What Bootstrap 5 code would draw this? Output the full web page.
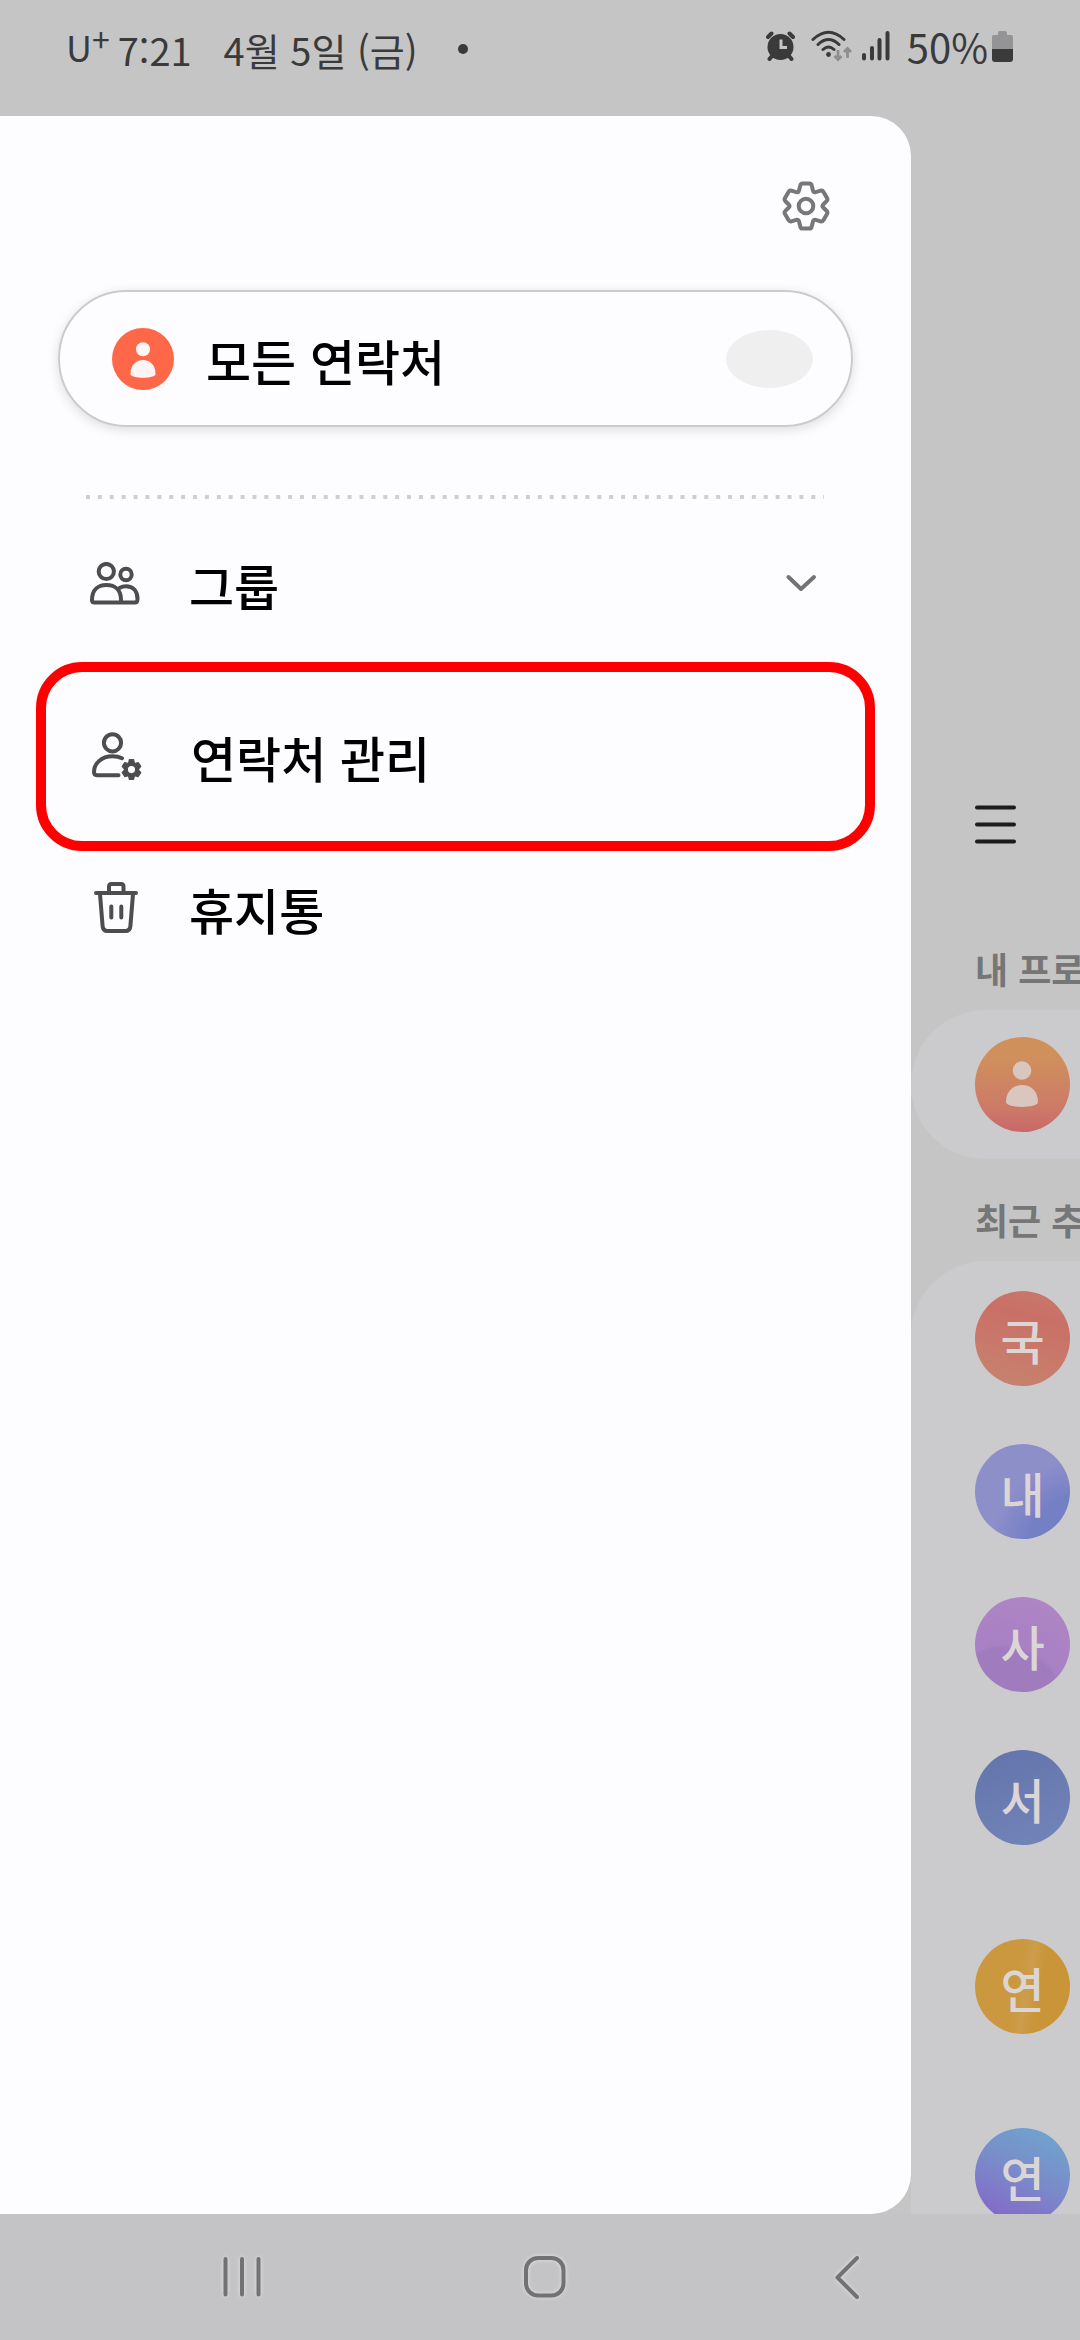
<!DOCTYPE html>
<html lang="ko">
<head>
<meta charset="utf-8">
<meta name="viewport" content="width=device-width, initial-scale=1">
<title>연락처</title>
<link href="https://cdn.jsdelivr.net/npm/bootstrap@5.3.0/dist/css/bootstrap.min.css" rel="stylesheet">
<style>
  body { background: #c5c5c6; color: #000; font-family: "Noto Sans CJK KR", sans-serif; font-size: 49px; line-height: 60px; font-weight: 500; }
  svg { display: block; flex: none; }
  .ln { fill: none; stroke: currentColor; stroke-width: 4; stroke-linecap: round; stroke-linejoin: round; }
  .ln-thin { stroke-width: 3; }
  .plain-btn { background: none; border: 0; padding: 0; color: inherit; font-weight: inherit; }

  .status-bar { height: 116px; padding: 0 66px; color: #3a3a3b; font-size: 38px; line-height: 48px; font-weight: 400; }
  .status-left { padding-top: 26px; }
  .status-right { padding-top: 22px; font-size: 40px; }
  .carrier { font-size: 36px; line-height: 40px; }
  .carrier sup { font-size: 32px; top: -10px; }
  .date-text { margin-left: 32px; }
  .notice-dot { width: 10px; height: 10px; margin: 18px 0 0 40px; background: #3a3a3b; }

  .main-area { min-height: 0; }
  .drawer { width: 911px; background: #fdfdff; border-radius: 0 40px 40px 0; padding-top: 65px; }
  .gear-btn { color: #777; margin-right: 81px; }
  .row-label { padding-top: 3px; }
  .all-contacts { height: 137px; margin: 59px 58px 0; padding: 0 38px 0 52px; border: 2px solid #cbcbcc; box-shadow: 0 3px 12px rgba(0,0,0,.13); }
  .all-contacts .row-label { margin-left: 32px; }
  .count-blank { width: 87px; height: 58px; border-radius: 50%; background: #efefef; }
  .dots { height: 4px; margin: 68px 87px 0 86px; background: linear-gradient(90deg, #cfcfd0 4px, transparent 4px) 0 0 / 12px 100% round; }
  .menu-row { width: 100%; padding: 0 94px 0 90px; }
  .menu-icon { width: 99px; color: #4d4d4e; }
  .row-group { height: 163px; padding-top: 5px; }
  .row-manage { height: 189px; margin: 0 36px; width: auto; padding: 0 46px; border: 10px solid #f00; border-radius: 46px; }
  .row-trash { height: 112px; }

  .side { min-width: 0; background: #c5c5c5; padding-top: 688px; }
  .side-menu { margin: 0 0 102px 64px; color: #1c1c1c; }
  .side-title { margin: 0 0 0 64px; font-size: 36px; line-height: 44px; font-weight: 700; color: #767677; }
  .side-card { background: #cbcbcd; padding-left: 64px; width: 100%; }
  .profile-card { height: 149px; border-radius: 75px 0 0 75px; margin-top: 20px; margin-bottom: 38px; }
  .recent-card { border-radius: 75px 0 0 0; margin-top: 20px; padding-top: 30px; gap: 58px; }
  .face { width: 95px; height: 95px; border-radius: 50%; color: #dcd5d5; font-size: 48px; line-height: 60px; flex: none; }
  .face-profile { background: linear-gradient(#d0905c 20%, #cc7a68 75%, #c9686b); }
  .face-a { background: linear-gradient(15deg, #c78470, #c97066 70%, #c87a6d); }
  .face-b { background: radial-gradient(circle at 110% 110%, #7480c4 35%, #8488c8 50%, #8d8fc9 60%); }
  .face-c { background: radial-gradient(circle at 30% 115%, #a07bbd 45%, #a880c4 48%, #b088c4); }
  .face-d { background: linear-gradient(160deg, #6373ab, #6c7eb4 60%, #7284b7); }
  .face-e { background: linear-gradient(100deg, #cb983f 45%, #cc9d4c 55%, #ca9539 66%); margin-top: 36px; }
  .face-f { background: linear-gradient(25deg, #8468c8 10%, #7a8aca 50%, #70a3cd 90%); margin-top: 36px; }

  .nav-keys { height: 126px; color: #727274; background: #c4c4c6; padding: 42px 220px 0 222px; }
  .nav-keys svg { filter: drop-shadow(0 0 2px #e4e4e6); }
</style>
<script src="https://cdn.jsdelivr.net/npm/bootstrap@5.3.0/dist/js/bootstrap.bundle.min.js"></script>
</head>
<body class="d-flex flex-column vh-100 overflow-hidden m-0">

<header class="status-bar d-flex justify-content-between align-items-start flex-shrink-0">
  <div class="status-left d-flex text-nowrap">
    <span class="carrier">U<sup>+</sup></span>
    <span class="ms-2">7:21</span>
    <span class="date-text">4월 5일 (금)</span>
    <span class="notice-dot rounded-circle"></span>
  </div>
  <div class="status-right d-flex align-items-center text-nowrap">
    <svg width="29" height="30" viewBox="0 0 29 30"><circle cx="14.500" cy="16" r="13" fill="currentColor"/><path class="ln" d="M2 6L5.500 2.500M27 6L23.500 2.500M3.500 28L6 25M25.500 28L23 25"/><path d="M15 8.500V16.500H21" fill="none" stroke="#c5c5c6" stroke-width="3"/></svg>
    <svg class="ms-3" width="41" height="32" viewBox="0 0 41 32"><path class="ln ln-thin" d="M2 9.500Q17.500 -5 33 9.500M7 14.500Q17.500 4.500 28 14.500M12 19.500Q17.500 14.500 23 19.500"/><circle cx="17.500" cy="24.500" r="2.400" fill="currentColor"/><path d="M27 20V29.500M23.500 26L27 29.500L30.500 26M36.500 28V18.500M33 22L36.500 18.500L40 22" fill="none" stroke="#8e8e90" stroke-width="2.800"/></svg>
    <svg class="ms-2" width="31" height="30" viewBox="0 0 31 30"><path class="ln" d="M4 24V27.500M12 17V27.500M19.500 9V27.500M27.500 2V27.500"/></svg>
    <span class="ms-3">50%</span>
    <svg class="ms-1" width="22" height="31" viewBox="0 0 22 31"><path fill="#949496" d="M0 19V6Q0 4 2 4H6V2Q6 0 8 0H13Q15 0 15 2V4H19Q21 4 21 6V19Z"/><path fill="currentColor" d="M0 18H21V28Q21 31 18 31H3Q0 31 0 28Z"/></svg>
  </div>
</header>

<div class="main-area d-flex flex-fill">
  <nav class="drawer flex-shrink-0" aria-label="연락처 메뉴">
    <div class="d-flex justify-content-end">
      <button type="button" class="plain-btn gear-btn" aria-label="설정">
        <svg width="48" height="50" viewBox="0 0 48 49"><path class="ln" d="M20.500 2H27.500Q29.300 2 29.700 4L31 9Q31.600 11.200 33.800 10.600L38.500 9.200Q40.500 8.700 41.500 10.400L45 16.600Q46 18.300 44.600 19.700L41.200 23Q39.800 24.500 41.200 26L44.600 29.300Q46 30.700 45 32.400L41.500 38.600Q40.500 40.300 38.500 39.800L33.800 38.400Q31.600 37.800 31 40L29.700 45Q29.300 47 27.500 47H20.500Q18.700 47 18.300 45L17 40Q16.400 37.800 14.200 38.400L9.500 39.800Q7.500 40.300 6.500 38.600L3 32.400Q2 30.700 3.400 29.300L6.800 26Q8.200 24.500 6.800 23L3.400 19.700Q2 18.300 3 16.600L6.500 10.400Q7.500 8.700 9.500 9.200L14.200 10.600Q16.400 11.200 17 9L18.300 4Q18.700 2 20.500 2Z"/><circle class="ln" cx="24" cy="24.500" r="7.300"/></svg>
      </button>
    </div>

    <a href="#all" class="all-contacts d-flex align-items-center rounded-pill text-decoration-none text-reset">
      <svg width="62" height="62" viewBox="0 0 62 62"><circle cx="31" cy="31" r="31" fill="#ff6749"/><g fill="#fcf5f4"><circle cx="31" cy="21.300" r="7"/><path d="M18.500 46C18.500 37 24 32 31 32S43.500 37 43.500 46C43.500 51 18.500 51 18.500 46Z"/></g></svg>
      <span class="row-label flex-fill">모든 연락처</span>
      <span class="count-blank"></span>
    </a>

    <div class="dots"></div>

    <button type="button" class="plain-btn menu-row row-group d-flex align-items-center text-start" aria-expanded="false">
      <span class="menu-icon"><svg width="50" height="43" viewBox="0 0 50 43"><g class="ln"><circle cx="16.300" cy="9.500" r="7.600"/><circle cx="36" cy="12.500" r="5.700"/><path d="M2 38C2 28 8 23 16.500 23S31 28 31 38Q31 40.500 29 40.500H4.500Q2 40.500 2 38ZM29.500 26Q32.500 24.300 36 24.300C43 24.300 47.500 29 47.500 37Q47.500 40.500 45 40.500H30"/></g></svg></span>
      <span class="row-label flex-fill">그룹</span>
      <svg width="32" height="20" viewBox="0 0 32 20" color="#737374"><path class="ln" d="M3.500 4L16 16L29 4"/></svg>
    </button>

    <a href="#manage" class="menu-row row-manage d-flex align-items-center text-decoration-none text-reset">
      <span class="menu-icon"><svg width="51" height="49" viewBox="0 0 51 49"><g class="ln"><circle cx="20.500" cy="10.800" r="8.600"/><path d="M30 26.200Q26 24.200 20.500 24.200C9 24.200 2 32 2 40Q2 43.200 5 43.200H26.500"/></g><path transform="translate(29.400 27.300) scale(.42)" fill="currentColor" stroke="currentColor" stroke-width="3" stroke-linejoin="round" fill-rule="evenodd" d="M19 1H29L31 10L40 8L46 17L40 24.500L46 32L40 41L31 39L29 48H19L17 39L8 41L2 32L8 24.500L2 17L8 8L17 10ZM24 14.500A10 10 0 1 0 24 34.500A10 10 0 1 0 24 14.500Z"/></svg></span>
      <span>연락처 관리</span>
    </a>

    <a href="#trash" class="menu-row row-trash d-flex align-items-center text-decoration-none text-reset">
      <span class="menu-icon ps-1"><svg width="44" height="51" viewBox="0 0 44 51"><path class="ln" d="M2 11H42M15 10V4.500Q15 2 17.500 2H27Q29.500 2 29.500 4.500V10M6 12L8.600 44Q9 49 13.500 49H31.500Q36 49 36.400 44L39 12M17.300 24.500V35.500M27.300 24.500V35.500"/></svg></span>
      <span class="row-label">휴지통</span>
    </a>
  </nav>

  <main class="side flex-fill overflow-hidden text-nowrap">
    <button type="button" class="plain-btn side-menu d-block" aria-label="메뉴">
      <svg width="42" height="40" viewBox="0 0 42 40"><path class="ln" d="M2 3.500H39M2 20.500H39M2 37.500H39"/></svg>
    </button>
    <h2 class="side-title">내 프로필</h2>
    <div class="side-card profile-card d-flex align-items-center">
      <div class="face face-profile"><svg width="95" height="95" viewBox="0 0 95 95"><g fill="#d8c6bf"><circle cx="47" cy="33.500" r="9.300"/><path d="M31 65C31 54 38 48 47 48S63 54 63 65C63 71.500 31 71.500 31 65Z"/></g></svg></div>
    </div>
    <h2 class="side-title">최근 추가</h2>
    <div class="side-card recent-card d-flex flex-column">
      <div class="face face-a d-flex align-items-center justify-content-center">국</div>
      <div class="face face-b d-flex align-items-center justify-content-center">내</div>
      <div class="face face-c d-flex align-items-center justify-content-center">사</div>
      <div class="face face-d d-flex align-items-center justify-content-center">서</div>
      <div class="face face-e d-flex align-items-center justify-content-center">연</div>
      <div class="face face-f d-flex align-items-center justify-content-center">연</div>
    </div>
  </main>
</div>

<footer class="nav-keys d-flex justify-content-between align-items-start flex-shrink-0">
  <button type="button" class="plain-btn" aria-label="최근 앱"><svg width="40" height="42" viewBox="0 0 40 42"><path class="ln" d="M3.500 3V38.500M20 3V38.500M36.500 3V38.500"/></svg></button>
  <button type="button" class="plain-btn" aria-label="홈"><svg width="50" height="42" viewBox="0 0 50 42"><rect class="ln" x="2" y="2" width="37.500" height="37.500" rx="12"/></svg></button>
  <button type="button" class="plain-btn" aria-label="뒤로"><svg width="25" height="43" viewBox="0 0 25 43"><path class="ln" d="M22 2L2.500 21.500L22 41"/></svg></button>
</footer>
</body>
</html>
